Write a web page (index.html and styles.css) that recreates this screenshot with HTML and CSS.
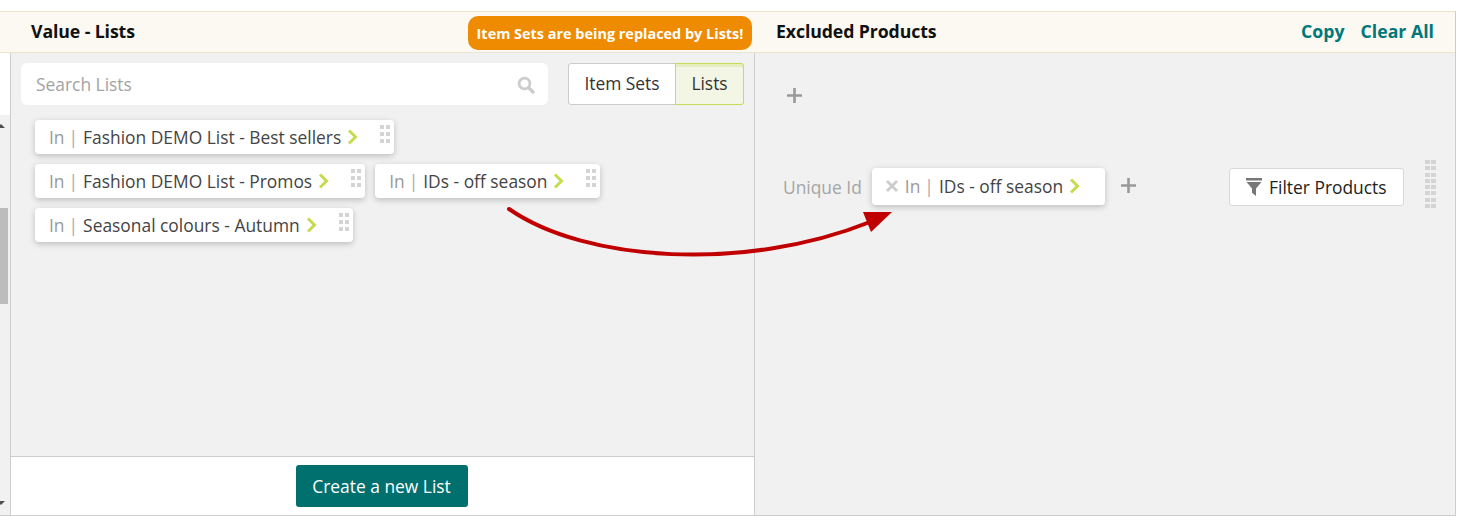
FILE: index.html
```html
<!DOCTYPE html>
<html lang="en">
<head>
<meta charset="utf-8">
<title>Value - Lists</title>
<link rel="stylesheet" href="styles.css">
</head>
<body>
<div class="frame">
  <header class="head">
    <div class="head-left">
      <h2 class="title">Value - Lists</h2>
      <span class="notice">Item Sets are being replaced by Lists!</span>
    </div>
    <div class="head-right">
      <h2 class="title">Excluded Products</h2>
      <div class="links"><a class="link">Copy</a><a class="link">Clear All</a></div>
    </div>
  </header>
  <div class="body">
    <div class="gutter">
      <div class="gutter-top"></div>
      <div class="track">
        <span class="arrow-up"></span>
        <span class="thumb"></span>
        <span class="arrow-down"></span>
      </div>
    </div>
    <section class="lists">
      <div class="lists-main">
        <div class="tools">
          <div class="search">
            <span class="placeholder">Search Lists</span>
            <svg class="search-icon" viewBox="0 0 18 18" width="18" height="18" aria-hidden="true"><circle cx="7.5" cy="7.5" r="5.4" fill="none" stroke="#ccc" stroke-width="2.8"/><path d="M11.6 11.6 16 16" stroke="#ccc" stroke-width="3.4" stroke-linecap="round"/></svg>
          </div>
          <div class="toggle">
            <span class="toggle-item">Item Sets</span>
            <span class="toggle-item active">Lists</span>
          </div>
        </div>
        <div class="chips">
          <div class="chip-row">
            <div class="chip"><span class="in">In</span><span class="sep">|</span><span class="name">Fashion DEMO List - Best sellers</span><svg class="chev" viewBox="0 0 11 16" width="11" height="16" aria-hidden="true"><path d="M2 1.5 8.5 8 2 14.5" fill="none" stroke="#c5dc4e" stroke-width="3"/></svg><span class="grip"><i></i><i></i><i></i><i></i><i></i><i></i></span></div>
          </div>
          <div class="chip-row">
            <div class="chip"><span class="in">In</span><span class="sep">|</span><span class="name">Fashion DEMO List - Promos</span><svg class="chev" viewBox="0 0 11 16" width="11" height="16" aria-hidden="true"><path d="M2 1.5 8.5 8 2 14.5" fill="none" stroke="#c5dc4e" stroke-width="3"/></svg><span class="grip"><i></i><i></i><i></i><i></i><i></i><i></i></span></div>
            <div class="chip"><span class="in">In</span><span class="sep">|</span><span class="name">IDs - off season</span><svg class="chev" viewBox="0 0 11 16" width="11" height="16" aria-hidden="true"><path d="M2 1.5 8.5 8 2 14.5" fill="none" stroke="#c5dc4e" stroke-width="3"/></svg><span class="grip"><i></i><i></i><i></i><i></i><i></i><i></i></span></div>
          </div>
          <div class="chip-row">
            <div class="chip"><span class="in">In</span><span class="sep">|</span><span class="name">Seasonal colours - Autumn</span><svg class="chev" viewBox="0 0 11 16" width="11" height="16" aria-hidden="true"><path d="M2 1.5 8.5 8 2 14.5" fill="none" stroke="#c5dc4e" stroke-width="3"/></svg><span class="grip"><i></i><i></i><i></i><i></i><i></i><i></i></span></div>
          </div>
        </div>
      </div>
      <div class="lists-foot"><button class="create">Create a new List</button></div>
    </section>
    <section class="excluded">
      <svg class="plus plus-top" viewBox="0 0 15 15" width="15" height="15" aria-hidden="true"><path d="M7.5 0v15M0 7.5h15" stroke="#999" stroke-width="2.6"/></svg>
      <div class="rule">
        <span class="rule-label">Unique Id</span>
        <div class="chip chip-rule">
          <svg class="cross" viewBox="0 0 12 12" width="12" height="12" aria-hidden="true"><path d="M1 1l10 10M11 1 1 11" stroke="#ccc" stroke-width="2.8"/></svg>
          <span class="in">In</span><span class="sep">|</span><span class="name">IDs - off season</span><svg class="chev" viewBox="0 0 11 16" width="11" height="16" aria-hidden="true"><path d="M2 1.5 8.5 8 2 14.5" fill="none" stroke="#c5dc4e" stroke-width="3"/></svg>
        </div>
        <svg class="plus" viewBox="0 0 15 15" width="15" height="15" aria-hidden="true"><path d="M7.5 0v15M0 7.5h15" stroke="#999" stroke-width="2.6"/></svg>
        <button class="filter"><svg viewBox="0 0 16 18" width="16" height="18" aria-hidden="true"><path d="M0 0h16v2.4H0zM0.5 4h15L10 10.5V18l-4-3.2v-4.3z" fill="#777"/></svg>Filter Products</button>
        <span class="grip grip-rule"><i></i><i></i><i></i><i></i><i></i><i></i><i></i><i></i><i></i><i></i><i></i><i></i><i></i><i></i><i></i><i></i></span>
      </div>
    </section>
  </div>
</div>
<svg class="arrow" viewBox="0 0 1467 523" width="1467" height="523" aria-hidden="true">
  <path d="M509 209C585 262 745 272 870 222" fill="none" stroke="#c00000" stroke-width="4" stroke-linecap="round"/>
  <path d="M892 212 863 212 871 232z" fill="#c00000"/>
</svg>
</body>
</html>
```
FILE: styles.css
```css
* { box-sizing: border-box; }
html, body { margin: 0; padding: 0; background: #fff; }
body {
  position: relative;
  height: 523px;
  overflow: hidden;
  font-family: "Open Sans", "Noto Sans", sans-serif;
  font-size: 17.4px;
  color: #444;
}
.frame {
  width: 1456px;
  height: 505px;
  margin-top: 11px;
  border-right: 1px solid #ccc;
  border-bottom: 1px solid #ccc;
  display: flex;
  flex-direction: column;
}
.head {
  flex: none;
  height: 42px;
  display: flex;
  background: #fbf9f1;
  border-top: 1px solid #ebe4cf;
  border-bottom: 1px solid #ebe4cf;
}
.head-left {
  width: 755px;
  padding: 0 3px 0 31px;
  display: flex;
  align-items: flex-start;
  justify-content: space-between;
}
.head-right {
  flex: 1;
  padding: 0 21px;
  display: flex;
  align-items: center;
  justify-content: space-between;
}
.title {
  margin: 0;
  font-size: 17.7px;
  line-height: 39px;
  font-weight: 700;
  color: #111;
  letter-spacing: -0.1px;
}
.head-right .title { margin-top: -1px; }
.notice {
  margin-top: 4px;
  height: 34px;
  width: 284px;
  text-align: center;
  line-height: 35px;
  background: #ee8b00;
  color: #fff;
  font-weight: 700;
  font-size: 14.45px;
  border-radius: 10px;
  white-space: nowrap;
}
.links { display: flex; gap: 16px; margin-top: -3px; }
.link { color: #00787a; font-weight: 700; font-size: 17.7px; }
.body { flex: 1; display: flex; min-height: 0; }
.gutter {
  flex: none;
  width: 11px;
  border-right: 1px solid #ccc;
  display: flex;
  flex-direction: column;
}
.gutter-top { flex: none; height: 62px; background: #fff; }
.track {
  flex: 1;
  background: #f1f1f1;
  width: 10px;
  display: flex;
  flex-direction: column;
  align-items: flex-start;
}
.arrow-up {
  margin: 9px 0 0 -3px;
  width: 0;
  height: 0;
  border-left: 4px solid transparent;
  border-right: 4px solid transparent;
  border-bottom: 4px solid #505050;
}
.thumb {
  margin-top: 80px;
  width: 8px;
  height: 96px;
  background: #bcbcbc;
}
.arrow-down {
  margin: auto 0 10px -3px;
  width: 0;
  height: 0;
  border-left: 4px solid transparent;
  border-right: 4px solid transparent;
  border-top: 4px solid #505050;
}
.lists {
  flex: none;
  width: 744px;
  border-right: 1px solid #ccc;
  display: flex;
  flex-direction: column;
}
.lists-main { flex: 1; background: #f1f1f1; padding: 10px 10px 0; }
.tools { display: flex; gap: 20px; }
.search {
  flex: none;
  width: 527px;
  height: 42px;
  background: #fff;
  border-radius: 6px;
  padding: 0 13px 0 15px;
  display: flex;
  align-items: center;
  justify-content: space-between;
}
.placeholder { color: #a3a3a3; margin-top: -1px; }
.search-icon { margin-top: 1px; }
.toggle {
  flex: none;
  width: 176px;
  height: 42px;
  display: flex;
  background: #fff;
  border: 1px solid #ccc;
  border-radius: 3px;
}
.toggle-item { flex: 1; text-align: center; line-height: 38px; color: #333; }
.active {
  flex: none;
  width: 69px;
  margin: -1px -1px -1px 0;
  padding-top: 3px;
  line-height: 33px;
  background: #f3f6e5;
  border: 1px solid #c8dc5a;
  box-shadow: inset 0 3px 0 #e6eebf;
  border-radius: 0 3px 3px 0;
}
.chips { display: flex; flex-direction: column; gap: 10px; padding: 15px 0 0 14px; }
.chip-row { display: flex; gap: 10px; }
.chip {
  height: 34px;
  display: flex;
  align-items: center;
  padding: 0 14px;
  background: #fff;
  border-radius: 4px;
  box-shadow: 0 2px 6px rgba(0, 0, 0, 0.22);
  white-space: nowrap;
}
.in { color: #9a9a9a; }
.sep { color: #a9a9a9; margin: 0 5px 0 4px; }
.name { color: #444; }
.chev { margin-left: 6px; flex: none; }
.grip {
  display: grid;
  grid-template-columns: 4px 4px;
  gap: 3px 2px;
  margin: -6px -10px 0 22px;
}
.grip i { display: block; height: 4px; background: #d4d4d4; }
.excluded {
  flex: 1;
  background: #f1f1f1;
  padding: 35px 0 0 32px;
  display: flex;
  flex-direction: column;
  align-items: flex-start;
}
.plus { display: block; flex: none; }
.rule {
  margin: 61px 0 0 -4px;
  width: 655px;
  height: 48px;
  display: flex;
  align-items: center;
}
.rule-label { color: #a5a5a5; margin: -2px 10px 0 0; }
.chip-rule {
  flex: none;
  width: 233px;
  height: 37px;
  margin-top: -3px;
  padding-bottom: 2px;
}
.cross { margin-right: 7px; flex: none; }
.rule .plus { margin: -5px 0 0 16px; }
.filter {
  flex: none;
  margin: -3px 0 0 93px;
  width: 175px;
  height: 38px;
  padding: 0;
  background: #fff;
  border: 1px solid #d8d8d8;
  border-radius: 3px;
  display: flex;
  align-items: center;
  justify-content: center;
  gap: 7px;
  font: 17.4px "Open Sans", "Noto Sans", sans-serif;
  color: #222;
}
.grip-rule {
  margin: -8px 0 0 21px;
  grid-template-columns: 5px 5px;
  gap: 2.3px 1px;
}
.lists-foot {
  flex: none;
  height: 59px;
  background: #fff;
  border-top: 1px solid #ccc;
  display: flex;
  justify-content: center;
  align-items: flex-start;
  padding: 8px 2px 0 0;
}
.create {
  width: 172px;
  height: 42px;
  background: #00706f;
  color: #fff;
  border: 0;
  border-radius: 3px;
  font: 17.4px "Open Sans", "Noto Sans", sans-serif;
}
.arrow { position: absolute; left: 0; top: 0; pointer-events: none; }
```
